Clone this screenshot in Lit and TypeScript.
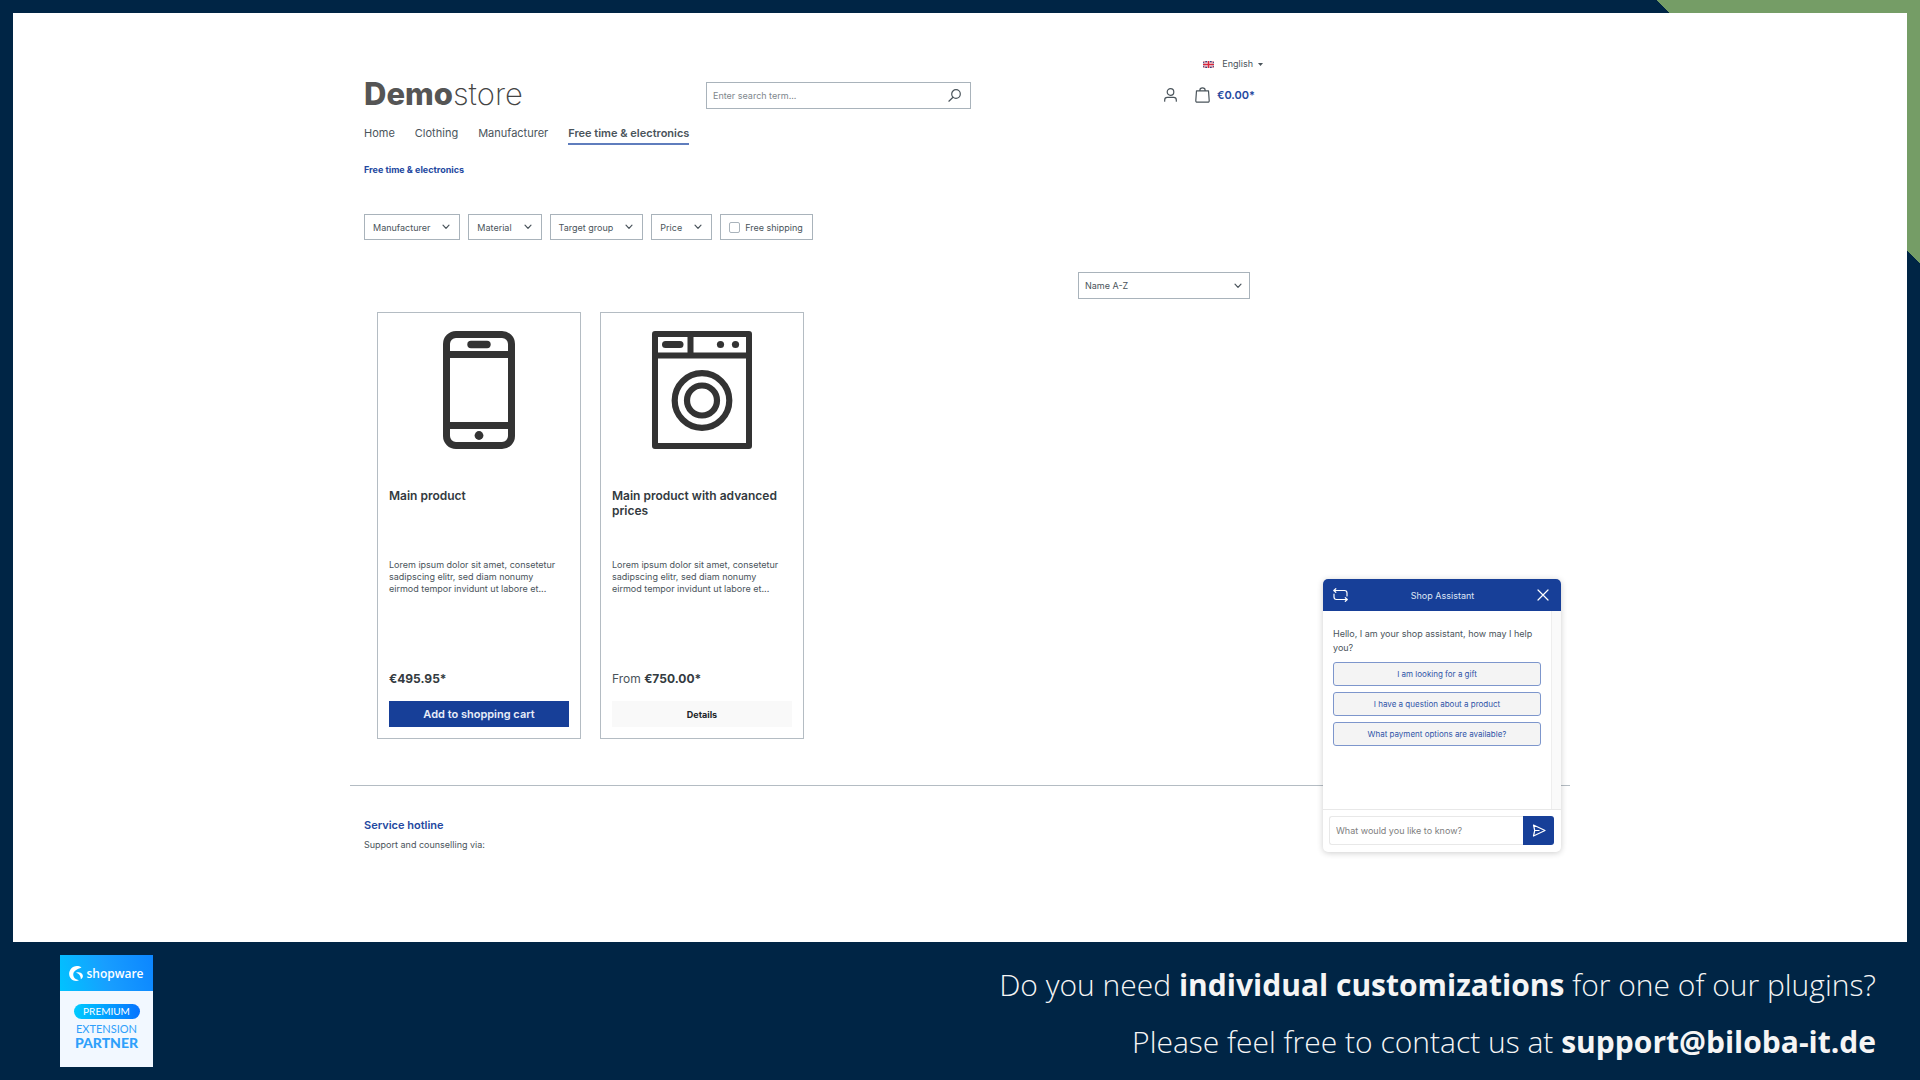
import { LitElement, html, css, svg } from "lit";
import { customElement } from "lit/decorators.js";

const chevron = html`<svg class="chevron" viewBox="0 0 8 6" aria-hidden="true"><path d="M1 1.2 4 4.4 7 1.2" /></svg>`;

const phone = svg`
  <svg class="picture" viewBox="0 0 72 118" role="img" aria-label="Smartphone">
    <rect x="3.5" y="3.5" width="65" height="111" rx="9.5" fill="none" stroke="#333" stroke-width="7" />
    <path d="M4 23.5H68M4 94.5H68" stroke="#333" stroke-width="7" />
    <path d="M28 13.5H44" stroke="#333" stroke-width="7.4" stroke-linecap="round" />
    <circle cx="36" cy="104.5" r="4.4" fill="#333" />
  </svg>`;

const washer = svg`
  <svg class="picture" viewBox="0 0 100 118" role="img" aria-label="Washing machine">
    <rect x="3" y="3" width="94" height="112" fill="none" stroke="#333" stroke-width="6" stroke-linejoin="round" />
    <path d="M3 24.5H97M38.5 3V24" stroke="#333" stroke-width="6" />
    <path d="M13.5 13.5H28" stroke="#333" stroke-width="7" stroke-linecap="round" />
    <circle cx="68.5" cy="13.5" r="3.6" fill="#333" />
    <circle cx="83.5" cy="13.5" r="3.6" fill="#333" />
    <circle cx="50" cy="69.5" r="27.3" fill="none" stroke="#333" stroke-width="6.2" />
    <circle cx="50" cy="69.5" r="15" fill="none" stroke="#333" stroke-width="6.2" />
  </svg>`;

const summary = "Lorem ipsum dolor sit amet, consetetur sadipscing elitr, sed diam nonumy eirmod tempor invidunt ut labore et...";

const products = [
  { name: "Main product", picture: phone, prefix: "", price: "€495.95*", action: "Add to shopping cart", primary: true },
  { name: "Main product with advanced prices", picture: washer, prefix: "From ", price: "€750.00*", action: "Details", primary: false },
];

@customElement("shop-assistant")
class ShopAssistant extends LitElement {
  static styles = css`
    :host {
      display: flex;
      flex-direction: column;
      box-sizing: border-box;
      background: #fff;
      border-radius: 5px;
      overflow: hidden;
      box-shadow: 0 1px 6px rgba(0, 0, 0, 0.2);
      color: #4a545b;
    }
    .head {
      display: flex;
      align-items: center;
      justify-content: space-between;
      padding: 0 12px 0 10px;
      height: 32px;
      background: #173f98;
      color: #dfe6f5;
      font-size: 9px;
    }
    .head h2 { margin: 0; font-size: 9px; font-weight: 400; }
    button { font-family: inherit; cursor: pointer; }
    .icon { display: flex; padding: 0; border: 0; background: none; }
    .icon svg { fill: none; stroke: #fff; stroke-width: 1.2; stroke-linecap: round; stroke-linejoin: round; }
    .restart svg { width: 15px; height: 14px; }
    .close svg { width: 12px; height: 12px; }
    .scroll { background: #fafafa; flex: 1; display: flex; }
    .body {
      flex: 1;
      padding: 16px 10px 0;
      margin-right: 9px;
      border-right: 1px solid #eee;
      background: #fff;
    }
    .hello { margin: 0 0 7px; font-size: 9px; line-height: 14px; }
    .options { display: flex; flex-direction: column; gap: 6px; }
    .option {
      height: 24px;
      padding: 0;
      border: 1px solid #7d96cc;
      border-radius: 3px;
      background: #f4f4f4;
      color: #3054a8;
      font-size: 8px;
    }
    .form {
      display: flex;
      padding: 6px 7px 7px 6px;
      border-top: 1px solid #e8e8e8;
    }
    .form input {
      flex: 1;
      min-width: 0;
      height: 29px;
      box-sizing: border-box;
      padding: 0 6px;
      border: 1px solid #e8e8e8;
      border-right: 0;
      border-radius: 3px 0 0 3px;
      font: 9px Inter, sans-serif;
      color: #4a545b;
    }
    .form input::placeholder { color: #808080; opacity: 1; }
    .send {
      display: flex;
      align-items: center;
      justify-content: center;
      width: 31px;
      padding: 0;
      border: 0;
      border-radius: 0 3px 3px 0;
      background: #173f98;
    }
    .send svg { width: 14px; height: 13px; fill: none; stroke: #fff; stroke-width: 1.2; stroke-linejoin: round; }
  `;

  render() {
    return html`
      <div class="head">
        <button class="icon restart" aria-label="Restart conversation">
          <svg viewBox="0 0 15 14"><path d="M2.800 0.700 0.800 2.500 2.800 4.300M1 2.500H11.500Q14 2.500 14 5V8M12.300 9.700 14.300 11.500 12.300 13.300M14 11.500H3.500Q1 11.500 1 9V6" /></svg>
        </button>
        <h2>Shop Assistant</h2>
        <button class="icon close" aria-label="Close">
          <svg viewBox="0 0 12 12"><path d="M1 1 11 11M11 1 1 11" /></svg>
        </button>
      </div>
      <div class="scroll">
        <div class="body">
          <p class="hello">Hello, I am your shop assistant, how may I help you?</p>
          <div class="options">
            ${["I am looking for a gift", "I have a question about a product", "What payment options are available?"].map(
              (text) => html`<button class="option">${text}</button>`
            )}
          </div>
        </div>
      </div>
      <form class="form">
        <input type="text" placeholder="What would you like to know?" aria-label="Your question" />
        <button class="send" type="button" aria-label="Send">
          <svg viewBox="0 0 14 13"><path d="M1.500 1 13 6.500 1.500 12 2.700 6.500ZM2.700 6.500H7.500" /></svg>
        </button>
      </form>
    `;
  }
}

@customElement("app-root")
class AppRoot extends LitElement {
  static styles = css`
    :host {
      display: flex;
      flex-direction: column;
      min-height: 100vh;
      box-sizing: border-box;
      background: linear-gradient(to bottom left, #759d66 0 50%, transparent 50%) top right / 264px 264px no-repeat, #002545;
      font-family: Inter, "Liberation Sans", sans-serif;
      color: #4a545b;
    }
    a { color: inherit; text-decoration: none; }
    button, input, select { font-family: inherit; color: inherit; }
    button { cursor: pointer; }
    .panel { flex: 1; display: flex; justify-content: center; margin: 13px 13px 0; background: #fff; }
    .shop {
      position: relative;
      box-sizing: border-box;
      flex: 1;
      max-width: 1220px;
      padding: 43px 0 88px;
    }
    .column { max-width: 900px; margin-left: 14px; }

    .topbar { display: flex; justify-content: flex-end; padding-right: 1px; }
    .language {
      display: flex;
      align-items: center;
      gap: 8px;
      padding: 0;
      border: 0;
      background: none;
      font-size: 9px;
      line-height: 16px;
    }
    .flag { width: 11px; height: 7px; }
    .caret { width: 5px; height: 3px; margin-left: -3px; fill: #4a545b; }

    .header { display: grid; grid-template-columns: 342fr 265fr 293fr; align-items: center; margin-top: 10px; }
    .logo { padding-bottom: 4px; font-size: 31px; line-height: 23px; font-weight: 200; color: #444; }
    .logo b { font-weight: 800; color: #555; }
    .search { display: flex; align-items: center; height: 27px; box-sizing: border-box; border: 1px solid #a9b3bb; padding: 0 9px 0 6px; }
    .search input { flex: 1; min-width: 0; padding: 0; border: 0; outline: 0; background: none; font-size: 9px; }
    .search input::placeholder { color: #7f878d; opacity: 1; }
    .icon { display: flex; padding: 0; border: 0; background: none; }
    .icon svg, .cart svg { fill: none; stroke: #4a545b; stroke-width: 1.2; stroke-linecap: round; stroke-linejoin: round; }
    .search svg { width: 13px; height: 13px; }
    .actions { display: flex; justify-content: flex-end; align-items: center; gap: 18px; padding: 0 9px 1px 0; }
    .actions svg { width: 13px; height: 14px; }
    .cart { display: flex; align-items: center; gap: 7px; color: #2348a0; font-size: 11px; font-weight: 600; }
    .cart svg { width: 15px; height: 16px; }

    .nav { display: flex; gap: 20px; margin-top: 16px; font-size: 11px; line-height: 16px; }
    .nav a { padding-bottom: 2px; border-bottom: 2px solid transparent; }
    .nav .active { font-weight: 600; border-color: #5f7dbd; }
    .crumb { margin-top: 17px; font-size: 9px; line-height: 16px; font-weight: 700; color: #2348a0; }

    .filters { display: flex; gap: 8px; margin-top: 36px; }
    .filter {
      display: flex;
      align-items: center;
      gap: 12px;
      height: 26px;
      box-sizing: border-box;
      padding: 0 9px 0 8px;
      border: 1px solid #a9b3bb;
      background: #fff;
      font-size: 9px;
    }
    .check { gap: 5px; }
    .check input { appearance: none; width: 11px; height: 11px; margin: 0; border: 1px solid #a9b3bb; border-radius: 2px; }
    .chevron { width: 8px; height: 6px; fill: none; stroke: #4a545b; stroke-width: 1.2; stroke-linecap: round; stroke-linejoin: round; }

    .sorting { display: flex; justify-content: flex-end; margin: 32px 14px 0 0; }
    .sort { display: grid; align-items: center; width: 172px; }
    .sort select, .sort .chevron { grid-area: 1 / 1; }
    .sort select { appearance: none; height: 27px; padding: 0 6px; border: 1px solid #a9b3bb; border-radius: 0; background: #fff; font-size: 9px; }
    .sort .chevron { justify-self: end; margin-right: 8px; pointer-events: none; }

    .products { display: flex; gap: 19px; margin: 13px 0 0 13px; }
    .card {
      display: flex;
      flex-direction: column;
      width: 204px;
      min-height: 427px;
      box-sizing: border-box;
      padding: 18px 11px 11px;
      border: 1px solid #b4bcc3;
    }
    .picture { height: 118px; align-self: center; }
    .name { min-height: 71px; margin: 39px 0 0; font-size: 12px; line-height: 15px; font-weight: 600; color: #333a40; }
    .summary { margin: 0; padding-right: 8px; font-size: 9px; line-height: 12px; }
    .price { margin: auto 0 14px; font-size: 12px; line-height: 16px; }
    .price b { font-weight: 700; color: #333a40; }
    .buy { height: 26px; padding: 0; border: 0; background: #f9f9f9; font-size: 9px; font-weight: 700; color: #212529; }
    .primary { background: #173f98; color: #e8edf8; font-size: 11px; font-weight: 600; }

    .service { margin-top: 46px; padding: 31px 14px 0; border-top: 1px solid #b4bcc3; }
    .service h2 { margin: 0 0 4px; font-size: 11px; line-height: 16px; font-weight: 600; color: #2348a0; }
    .service p { margin: 0; font-size: 9px; line-height: 16px; }
    .assistant { position: absolute; right: 9px; bottom: 90px; width: 238px; height: 273px; }

    .promo {
      display: flex;
      justify-content: space-between;
      align-items: flex-start;
      min-height: 138px;
      box-sizing: border-box;
      padding: 13px 44px 0 60px;
      color: #f5f5f5;
    }
    .badge { width: 93px; background: #f2f8ff; text-align: center; font-family: Lato, sans-serif; color: #2fa0fb; }
    .brand {
      display: flex;
      align-items: center;
      justify-content: center;
      gap: 3px;
      height: 36px;
      background: linear-gradient(75deg, #00c3ff, #189eff 50%, #0c86ff);
      color: #fff;
      font: 600 12px "Open Sans", sans-serif;
    }
    .brand svg { width: 14px; height: 15px; }
    .level {
      width: 66px;
      margin: 13px auto 0;
      border-radius: 8px;
      background: linear-gradient(90deg, #00cbff, #0673ff);
      color: #fff;
      font-size: 10px;
      line-height: 15px;
    }
    .kind { padding-top: 3px; font-size: 11px; line-height: 13px; }
    .partner { padding-bottom: 17px; font-size: 14px; line-height: 15px; font-weight: 900; }
    .message { padding-top: 1px; text-align: right; font: 300 30px/57px "Open Sans", "Noto Sans", sans-serif; }
    .message p { margin: 0; }
    .message b { font-weight: 700; }
  `;

  render() {
    return html`
      <main class="panel">
        <div class="shop">
          <div class="column">
            <div class="topbar">
              <button class="language">
                <svg class="flag" viewBox="0 0 11 7" aria-hidden="true">
                  <rect width="11" height="7" fill="#34437f" />
                  <path d="M0 0 11 7M11 0 0 7" stroke="#fff" stroke-width="1.400" />
                  <path d="M0 0 11 7M11 0 0 7" stroke="#d8263c" stroke-width="0.600" />
                  <path d="M5.500 0V7M0 3.500H11" stroke="#fff" stroke-width="2.600" />
                  <path d="M5.500 0V7M0 3.500H11" stroke="#d8263c" stroke-width="1.600" />
                </svg>
                English
                <svg class="caret" viewBox="0 0 5 3" aria-hidden="true"><path d="M0 0H5L2.500 3Z" /></svg>
              </button>
            </div>
            <header class="header">
              <a class="logo" href="#"><b>Demo</b>store</a>
              <form class="search">
                <input type="search" placeholder="Enter search term..." aria-label="Search" />
                <button class="icon" type="button" aria-label="Start search">
                  <svg viewBox="0 0 13 13"><circle cx="8" cy="5" r="4.300" /><path d="M5 8.200 0.900 12.200" /></svg>
                </button>
              </form>
              <div class="actions">
                <button class="icon" aria-label="Your account">
                  <svg viewBox="0 0 13 14"><circle cx="6.500" cy="4" r="3.300" /><path d="M0.700 13.200V12Q0.700 9.400 3.300 9.400H9.700Q12.300 9.400 12.300 12V13.200" /></svg>
                </button>
                <a class="cart" href="#">
                  <svg viewBox="0 0 15 16" aria-hidden="true"><path d="M1.500 3.800H13.500L14.200 13.500Q14.300 15.200 12.700 15.200H2.300Q0.700 15.200 0.800 13.500ZM4.900 3.800V3A2.600 2.200 0 0 1 10.100 3V3.800" /></svg>
                  €0.00*
                </a>
              </div>
            </header>
            <nav class="nav">
              <a href="#">Home</a><a href="#">Clothing</a><a href="#">Manufacturer</a><a class="active" href="#">Free time &amp; electronics</a>
            </nav>
            <div class="crumb"><a href="#">Free time &amp; electronics</a></div>
            <div class="filters">
              ${["Manufacturer", "Material", "Target group", "Price"].map(
                (name) => html`<button class="filter">${name}${chevron}</button>`
              )}
              <label class="filter check"><input type="checkbox" />Free shipping</label>
            </div>
            <div class="sorting">
              <div class="sort">
                <select aria-label="Sorting"><option>Name A-Z</option></select>
                ${chevron}
              </div>
            </div>
            <div class="products">
              ${products.map(
                (p) => html`
                  <article class="card">
                    ${p.picture}
                    <h3 class="name">${p.name}</h3>
                    <p class="summary">${summary}</p>
                    <p class="price">${p.prefix}<b>${p.price}</b></p>
                    <button class="buy ${p.primary ? "primary" : ""}">${p.action}</button>
                  </article>
                `
              )}
            </div>
          </div>
          <section class="service">
            <h2>Service hotline</h2>
            <p>Support and counselling via:</p>
          </section>
          <shop-assistant class="assistant"></shop-assistant>
        </div>
      </main>
      <footer class="promo">
        <div class="badge">
          <div class="brand">
            <svg viewBox="0 0 14 15" aria-hidden="true">
              <path fill="#fff" d="M12.500 1.500C9-.8 4.500-.2 2 2.700-.7 6-.4 10.700 2.500 13.200 4.500 15 7.500 15.400 10 14.300 5.500 13.500 4 10.500 4.300 8 4.600 4.800 8 3.300 12.500 1.500Z" />
              <path fill="#fff" d="M7 6.500C10 5.700 14 7 13.900 10 13.800 11.800 12.800 12.800 11.800 13.200 12 9.500 9.500 7.500 7 6.500Z" />
            </svg>
            shopware
          </div>
          <div class="level">PREMIUM</div>
          <div class="kind">EXTENSION</div>
          <div class="partner">PARTNER</div>
        </div>
        <div class="message">
          <p>Do you need <b>individual customizations</b> for one of our plugins?</p>
          <p>Please feel free to contact us at <b>support@biloba-it.de</b></p>
        </div>
      </footer>
    `;
  }
}
